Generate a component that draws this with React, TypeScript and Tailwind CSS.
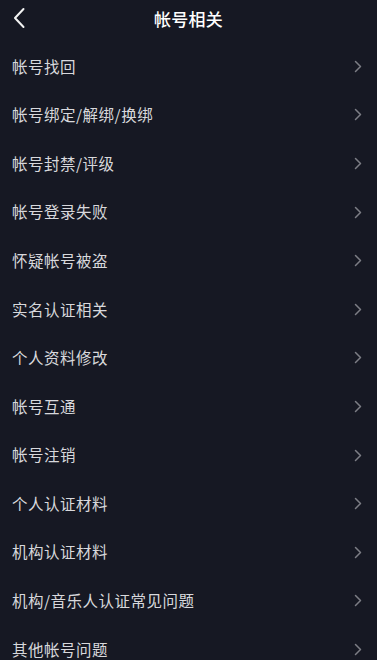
const items = [
  '帐号找回',
  '帐号绑定/解绑/换绑',
  '帐号封禁/评级',
  '帐号登录失败',
  '怀疑帐号被盗',
  '实名认证相关',
  '个人资料修改',
  '帐号互通',
  '帐号注销',
  '个人认证材料',
  '机构认证材料',
  '机构/音乐人认证常见问题',
  '其他帐号问题',
]

function Chevron() {
  return (
    <svg width="8" height="13" viewBox="0 0 8 13" fill="none">
      <path d="M1.5 1.5L6.5 6.5L1.5 11.5" stroke="#7c7d85" strokeWidth="1.5" strokeLinecap="round" strokeLinejoin="round" />
    </svg>
  )
}

export default function App() {
  return (
    <div
      className="w-[377px] h-[660px] overflow-hidden bg-[#161823]"
      style={{ fontFamily: '"Noto Sans CJK SC", "Noto Sans", sans-serif' }}
    >
      {/* Header */}
      <div className="relative h-[37px] flex items-center justify-center">
        <button className="absolute left-[12px] top-[7px] p-0">
          <svg width="14" height="22" viewBox="0 0 14 22" fill="none">
            <path d="M11.5 2L3 11L11.5 20" stroke="#f2f2f2" strokeWidth="2" strokeLinecap="round" strokeLinejoin="round" />
          </svg>
        </button>
        <h1 className="text-[17px] font-medium text-white leading-none tracking-[0.3px]">帐号相关</h1>
      </div>

      {/* List */}
      <div className="pt-[5px]">
        {items.map((label) => (
          <div key={label} className="h-[48.6px] flex items-center justify-between pl-[12px] pr-[15px]">
            <span className="text-[15.5px] text-[#d8d8dc] leading-none tracking-[0.5px]">{label}</span>
            <Chevron />
          </div>
        ))}
      </div>
    </div>
  )
}
